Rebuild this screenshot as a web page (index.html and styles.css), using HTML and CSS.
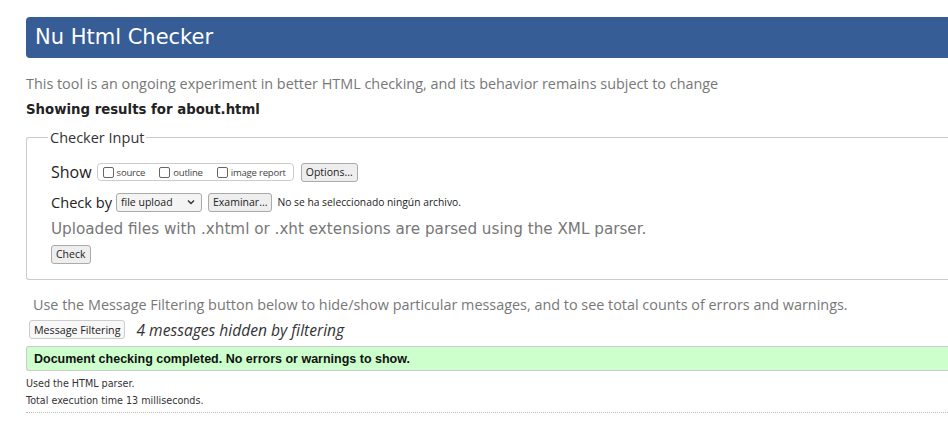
FILE: index.html
```html
<!DOCTYPE html>
<html lang="en">
<head>
<meta charset="utf-8">
<title>Nu Html Checker</title>
<link rel="stylesheet" href="styles.css">
</head>
<body>
<div class="page">
  <h1 class="title">Nu Html Checker</h1>
  <p class="intro">This tool is an ongoing experiment in better HTML checking, and its behavior remains subject to change</p>
  <p class="showing">Showing results for about.html</p>
  <fieldset class="input">
    <legend class="legend">Checker Input</legend>
    <div class="row row-show">
      <span class="label label-show">Show</span>
      <span class="opts">
        <label class="opt"><span class="cb"></span>source</label>
        <label class="opt"><span class="cb"></span>outline</label>
        <label class="opt"><span class="cb"></span>image report</label>
      </span>
      <span class="btn">Options...</span>
    </div>
    <div class="row row-check">
      <span class="label label-check">Check by</span>
      <span class="select">file upload<svg class="chev" width="8" height="6" viewBox="0 0 8 6"><path d="M1 1.5 L4 4.5 L7 1.5" fill="none" stroke="#333" stroke-width="1.4"/></svg></span>
      <span class="btn">Examinar...</span>
      <span class="nofile">No se ha seleccionado ningún archivo.</span>
    </div>
    <p class="note">Uploaded files with .xhtml or .xht extensions are parsed using the XML parser.</p>
    <span class="btn btn-check">Check</span>
  </fieldset>
  <p class="filterinfo">Use the Message Filtering button below to hide/show particular messages, and to see total counts of errors and warnings.</p>
  <div class="filterrow">
    <span class="btn btn-filter">Message Filtering</span>
    <em class="hidden">4 messages hidden by filtering</em>
  </div>
  <div class="success">Document checking completed. No errors or warnings to show.</div>
  <p class="small">Used the HTML parser.</p>
  <p class="small">Total execution time 13 milliseconds.</p>
  <hr class="dots">
</div>
</body>
</html>
```
FILE: styles.css
```css
html, body {
  margin: 0;
  padding: 0;
  overflow: hidden;
  background: #fff;
}
.page {
  width: 1100px;
  padding: 17px 0 0 26px;
  font-family: "DejaVu Sans", sans-serif;
  color: #222;
}
.title {
  margin: 0;
  height: 41px;
  box-sizing: border-box;
  padding: 6px 0 0 9px;
  background: #365d95;
  border-radius: 4px 0 0 4px;
  color: #fff;
  font-weight: normal;
  font-size: 21px;
  line-height: 28px;
}
.intro {
  margin: 16px 0 0;
  color: #777;
  font-family: "Open Sans", sans-serif;
  font-size: 14.4px;
  line-height: 20px;
}
.showing {
  margin: 6px 0 0;
  font-weight: bold;
  font-size: 13.3px;
  line-height: 20px;
}
.input {
  margin: 8px 0 0;
  padding: 15px 24px 15px 24px;
  border: 1px solid #ccc;
  border-right: 0;
  border-radius: 3px 0 0 3px;
}
.legend {
  padding: 0 2px;
  margin-left: -3px;
  font-family: "Open Sans", sans-serif;
  font-size: 14.5px;
  color: #333;
}
.row {
  display: flex;
  align-items: center;
  height: 20px;
}
.row-check {
  margin-top: 10px;
}
.label {
  font-family: "Open Sans", sans-serif;
  color: #222;
  margin-right: 5px;
}
.label-show {
  font-size: 16px;
}
.label-check {
  font-size: 14.6px;
  margin-right: 4px;
}
.opts {
  display: flex;
  align-items: center;
  gap: 14px;
  height: 16px;
  padding: 0 7px 0 5px;
  border: 1px solid #ccc;
  border-radius: 4px;
  margin-right: 7px;
}
.opt {
  display: flex;
  align-items: center;
  font-family: "Open Sans", sans-serif;
  font-size: 9.5px;
  color: #444;
  letter-spacing: -0.2px;
}
.cb {
  width: 9px;
  height: 9px;
  border: 1px solid #666;
  border-radius: 2px;
  margin-right: 3px;
}
.btn {
  display: inline-flex;
  align-items: center;
  height: 19px;
  box-sizing: border-box;
  padding: 0 4px;
  border: 1px solid #aaa;
  border-radius: 3px;
  background: #eee;
  font-family: "Open Sans", sans-serif;
  font-size: 10.5px;
  color: #222;
}
.select {
  display: inline-flex;
  align-items: center;
  justify-content: space-between;
  width: 86px;
  height: 19px;
  box-sizing: border-box;
  padding: 0 6px 0 4px;
  border: 1px solid #aaa;
  border-radius: 3px;
  background: #f4f4f4;
  font-family: "Open Sans", sans-serif;
  font-size: 10.5px;
  margin-right: 6px;
}
.nofile {
  margin-left: 5px;
  font-family: "Open Sans", sans-serif;
  font-size: 10.3px;
  color: #222;
}
.note {
  margin: 7px 0 4px;
  color: #777;
  font-size: 15.2px;
  line-height: 20px;
}
.filterinfo {
  margin: 15px 0 0 7px;
  color: #777;
  font-family: "Open Sans", sans-serif;
  font-size: 14.4px;
  line-height: 20px;
}
.filterrow {
  display: flex;
  align-items: center;
  margin: 5px 0 0 3px;
  height: 20px;
}
.btn-filter {
  background: #f7f7f7;
  border-color: #ccc;
  padding: 0 4px;
  font-size: 10.7px;
}
.hidden {
  margin-left: 11px;
  font-family: "Open Sans", sans-serif;
  font-size: 15.6px;
  color: #333;
}
.success {
  margin-top: 6px;
  height: 25px;
  box-sizing: border-box;
  padding: 4px 0 0 7px;
  background: #ccffcc;
  border: 1px solid #ccc;
  border-right: 0;
  border-radius: 3px 0 0 3px;
  font-family: "Liberation Sans", sans-serif;
  font-weight: bold;
  font-size: 12.5px;
  line-height: 16px;
  color: #111;
}
.small {
  margin: 0;
  font-size: 9.6px;
  line-height: 17px;
  color: #333;
}
.success + .small {
  margin-top: 4px;
}
.dots {
  margin: 3px 0 0;
  border: 0;
  border-top: 1px dotted #bbb;
}
```
